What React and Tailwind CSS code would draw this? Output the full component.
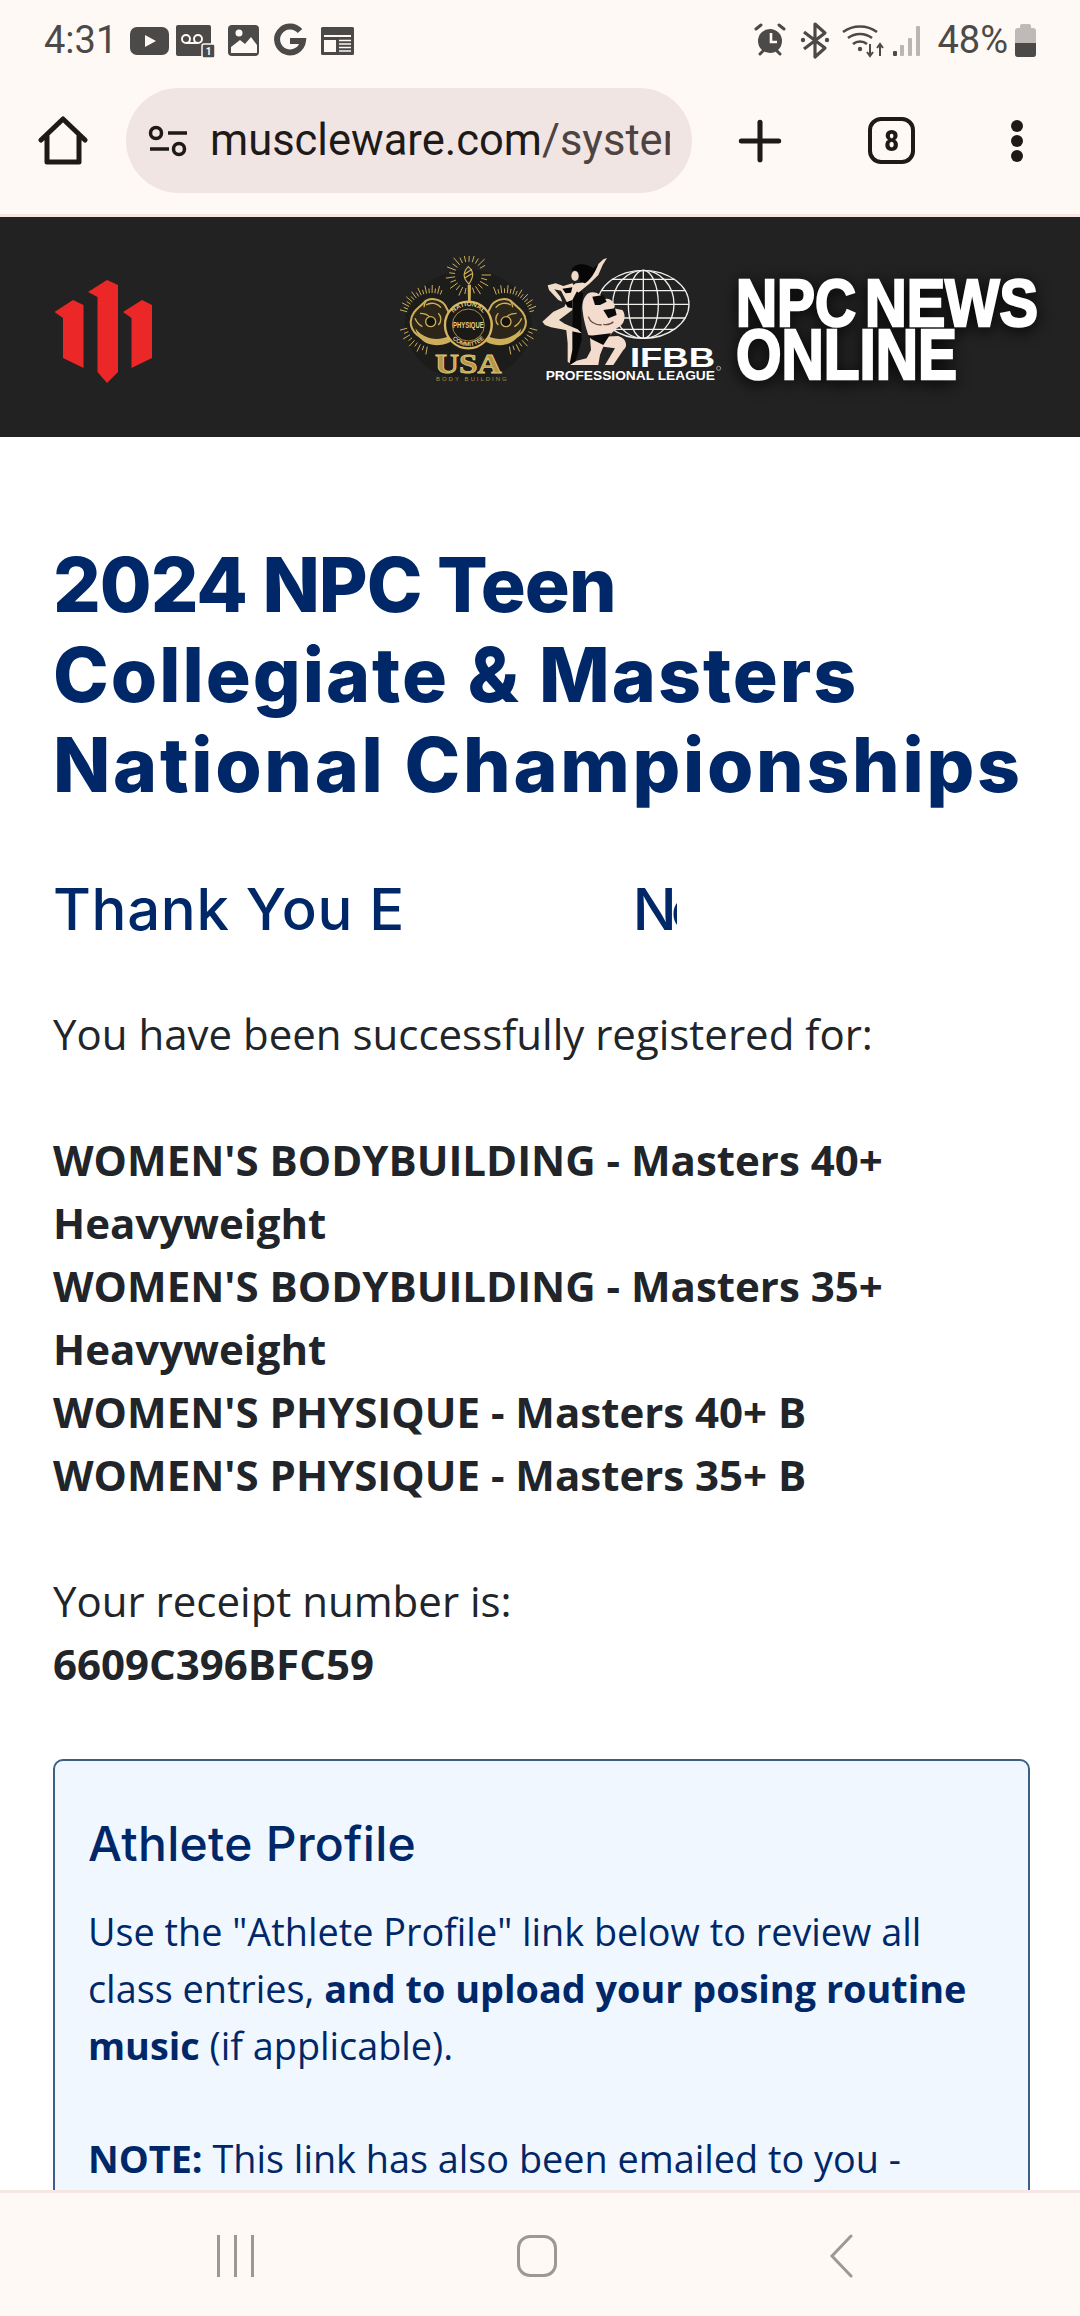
import React from 'react';
import { Plus } from 'lucide-react';

const bodyFont = "font-['Open_Sans',sans-serif]";
const headFont = "font-['Inter',sans-serif]";
const GOLD = '#cdae5a';

const StatusIcons = () => (
  <svg width="226" height="40" viewBox="0 0 226 40" className="block">
    {/* youtube */}
    <rect x="1" y="7" width="39" height="28" rx="7" fill="#4b4a48" />
    <path d="M16 15l11 6-11 6z" fill="#fff9f6" />
    {/* voicemail */}
    <rect x="47" y="5" width="35" height="31" rx="2" fill="#4b4a48" />
    <circle cx="57" cy="19" r="4" fill="none" stroke="#fff9f6" strokeWidth="2" />
    <circle cx="69" cy="19" r="4" fill="none" stroke="#fff9f6" strokeWidth="2" />
    <path d="M57 23h12" stroke="#fff9f6" strokeWidth="2" />
    <rect x="73" y="24" width="13" height="14" rx="2" fill="#4b4a48" stroke="#fff9f6" strokeWidth="1.500" />
    <text x="79.500" y="35" fontSize="10" fontWeight="700" textAnchor="middle" fill="#fff9f6" fontFamily="Roboto, sans-serif">1</text>
    {/* picture */}
    <rect x="99" y="5" width="31" height="31" rx="4" fill="#4b4a48" />
    <path d="M102 33v-6l9-7 5 4 6-7 6 8v8z" fill="#fff9f6" />
    <circle cx="110" cy="13" r="3.500" fill="#fff9f6" />
    {/* google */}
    <path d="M171 11a13 13 0 1 0 3 10h-13" fill="none" stroke="#4b4a48" strokeWidth="6" />
    {/* news */}
    <rect x="192" y="7" width="33" height="28" rx="1.500" fill="#4b4a48" />
    <rect x="195" y="15" width="27" height="2" fill="#fff9f6" />
    <rect x="195" y="20" width="12" height="12" fill="#fff9f6" />
    <path d="M210 20.500h12M210 24h12M210 27.500h12M210 31h12" stroke="#fff9f6" strokeWidth="1.600" />
  </svg>
);

const SystemIcons = () => (
  <svg width="167" height="40" viewBox="0 0 167 40" className="block">
    {/* alarm */}
    <circle cx="16" cy="21" r="12" fill="#4b4a48" />
    <path d="M17 13v9h6" fill="none" stroke="#fff9f6" strokeWidth="2.600" />
    <path d="M2 9l5-4M30 9l-5-4M6 34l3-3M26 34l-3-3" stroke="#4b4a48" strokeWidth="3" strokeLinecap="round" />
    {/* bluetooth */}
    <path d="M50 12l21 16-10 9V4l10 9-21 16" fill="none" stroke="#4b4a48" strokeWidth="3.200" strokeLinejoin="round" />
    <circle cx="49" cy="20" r="2.200" fill="#4b4a48" />
    <circle cx="73" cy="20" r="2.200" fill="#4b4a48" />
    {/* wifi */}
    <path d="M89 12a29 29 0 0 1 34 0M94 18a20 20 0 0 1 24 0M99 24a11 11 0 0 1 14 0" fill="none" stroke="#4b4a48" strokeWidth="2.600" />
    <circle cx="106" cy="29" r="2.200" fill="#4b4a48" />
    <path d="M116 24v12M113 32l3 4 3-4M126 36V24M123 28l3-4 3 4" fill="none" stroke="#4b4a48" strokeWidth="2" />
    {/* signal */}
    <rect x="139" y="31" width="4" height="5" rx="1" fill="#4b4a48" />
    <rect x="146" y="25" width="4" height="11" rx="1" fill="#b9b6b3" />
    <rect x="154" y="18" width="4" height="18" rx="1" fill="#b9b6b3" />
    <rect x="162" y="6" width="4" height="30" rx="1" fill="#b9b6b3" />
  </svg>
);

const Battery = () => (
  <svg width="21" height="33" viewBox="0 0 21 33" className="block">
    <rect x="5" y="0" width="11" height="6" rx="2" fill="#bfbab7" />
    <rect x="0" y="4" width="21" height="29" rx="3" fill="#bfbab7" />
    <path d="M0 19h21v11a3 3 0 0 1-3 3H3a3 3 0 0 1-3-3z" fill="#4b4a48" />
  </svg>
);

const TabCount = () => (
  <div className="w-[47px] h-[47px] rounded-[13px] border-[4px] border-[#1d1a18] flex items-center justify-center">
    <span className="font-['Roboto',sans-serif] font-black text-[30px] leading-none text-[#1d1a18] scale-x-[0.85]">8</span>
  </div>
);

const RedLogo = () => (
  <svg width="100" height="132" viewBox="54 256 100 132" className="block shrink-0">
    <path d="M88 292l19-12 11 5v87l-11 11-9.500-11V297z" fill="#ec2727" />
    <path d="M54.500 312l18.500-12 10.500 5v63L63 358v-40z" fill="#ec2727" />
    <path d="M123 312l19-12 10 5v53l-20.500 10v-50z" fill="#ec2727" />
  </svg>
);

// fan of short strokes round a point, for the sunburst on the emblem
const rays = (cx, cy, r1, r2, from, to, n) =>
  Array.from({ length: n }, (_, i) => {
    const a = ((from + ((to - from) * i) / (n - 1)) * Math.PI) / 180;
    const long = i % 2 === 0 ? r2 : r2 - 10;
    return (
      <line
        key={`${cx}-${from}-${i}`}
        x1={cx + Math.cos(a) * r1}
        y1={cy + Math.sin(a) * r1}
        x2={cx + Math.cos(a) * long}
        y2={cy + Math.sin(a) * long}
      />
    );
  });

const EmblemArm = () => (
  <g>
    <path d="M135 165C120 145 85 140 70 160 55 175 35 185 32 215c0 30 28 55 68 57l40-2 10-20c-20-10-20-40-2-60z" fill="#2b2619" stroke={GOLD} strokeWidth="6" />
    <path d="M46 235c20 28 62 42 99 24l6 17c-48 22-96 5-105-41z" fill={GOLD} />
    <path d="M78 165c15-10 35-5 45 8M60 190c15 0 25 5 30 12M115 190c10 10 10 25 0 35M45 205c5 12 12 20 22 25M80 150c-5 8-8 14-8 22" fill="none" stroke={GOLD} strokeWidth="4" />
    <circle cx="92" cy="215" r="15" fill="#14120e" stroke={GOLD} strokeWidth="4" />
  </g>
);

const NpcEmblem = () => (
  <svg width="140" height="132" viewBox="400 256 140 132" className="block shrink-0">
    <g transform="translate(400 250) scale(0.3333)">
      <ellipse cx="205" cy="225" rx="190" ry="165" fill="#1c1c1a" />
      <g stroke={GOLD} strokeWidth="3">
        {rays(205, 75, 40, 68, 0, 330, 24)}
        {rays(95, 205, 76, 100, 195, 290, 16)}
        {rays(315, 205, 76, 100, -110, -15, 16)}
        {rays(95, 215, 76, 100, 100, 165, 9)}
        {rays(315, 215, 76, 100, 15, 80, 9)}
      </g>
      <path d="M205 50c16 14 18 28 2 52-18-16-20-34-2-52zM194 72l22-14M194 84l24-14" fill="none" stroke={GOLD} strokeWidth="3.500" />
      <path d="M203 104h10l-1 52h-8z" fill={GOLD} />
      <EmblemArm />
      <g transform="translate(410 0) scale(-1 1)">
        <EmblemArm />
      </g>
      <circle cx="205" cy="225" r="70" fill="#1b1a16" stroke="#d5b562" strokeWidth="7" />
      <circle cx="205" cy="225" r="48" fill="#1b1a16" stroke="#a58a45" strokeWidth="3" />
      <defs>
        <path id="npcTop" d="M148 225a57 57 0 0 1 114 0" />
        <path id="npcBottom" d="M142 225a63 63 0 0 0 126 0" />
      </defs>
      <text fontSize="20" fontWeight="700" fill="#e2c878" fontFamily="'Liberation Sans', sans-serif" textAnchor="middle">
        <textPath href="#npcTop" startOffset="50%">NATIONAL</textPath>
      </text>
      <text fontSize="18" fontWeight="700" fill="#e2c878" fontFamily="'Liberation Sans', sans-serif" textAnchor="middle">
        <textPath href="#npcBottom" startOffset="50%">COMMITTEE</textPath>
      </text>
      <text x="205" y="234" fontSize="26" fontWeight="700" fill="#e8cf83" textAnchor="middle" textLength="92" lengthAdjust="spacingAndGlyphs" fontFamily="'Liberation Sans', sans-serif">PHYSIQUE</text>
      <text x="205" y="369" fontSize="82" fontWeight="700" fill="#b3964b" stroke="#e0c675" strokeWidth="2.500" textAnchor="middle" textLength="200" lengthAdjust="spacingAndGlyphs" fontFamily="'Liberation Serif', serif">USA</text>
      <text x="214" y="394" fontSize="18" fill="#a58a45" textAnchor="middle" textLength="212" fontFamily="'Liberation Sans', sans-serif">BODY   BUILDING</text>
    </g>
  </svg>
);

const IfbbLogo = () => (
  <svg width="190" height="132" viewBox="535 256 190 132" className="block shrink-0">
    <g transform="translate(535 250) scale(0.3333)">
      {/* globe */}
      <g fill="none" stroke="#f1efec" strokeWidth="4">
        <ellipse cx="325" cy="163" rx="137" ry="102" />
        <ellipse cx="325" cy="163" rx="92" ry="102" />
        <ellipse cx="325" cy="163" rx="45" ry="102" />
        <path d="M325 61v204M188 163h274M198 122h254M230 88h190M198 204h254M230 238h190" />
      </g>
      {/* woman */}
      <path d="M112 130l18-10 15 10-7 50 2 90-20 70-15 5 7-55v-55l2-55z" fill="#080808" />
      <path d="M216 24l-11 4-15 14-18 30-32 26-18 2-10 8 18 20 35-28 25-25 13-30z" fill="#f1dcca" />
      <path d="M112 100l-27 8-23-8-24 6 4 14 28 30 12 5-6-15-18-22 20 4 17 33-7 15-33 15-33 30 8 10 18 7 32 6 60 12-12-12-38-16-18-12 40-30v-30l16-30z" fill="#f1dcca" />
      <path d="M92 222l20 18v60l-8 40-6-5v-55z" fill="#f1dcca" />
      <ellipse cx="120" cy="78" rx="11" ry="15" fill="#f1dcca" />
      <path d="M108 62c7-22 42-27 67-7l15-13c-10 28-25 48-40 58l-15-5-3-25c-4-10-17-12-24-8z" fill="#060606" />
      <path d="M82 116l30-4-4 16-16 2zM90 158l22-8v25l-14-3z" fill="#060606" />
      {/* man */}
      <path d="M160 130c15-8 40 0 45 20 20-15 45 20 30 25l27 5c13 15 8 45-17 55l-20 20-35 7-30-7c-10-30-15-50-18-80 0-25 8-37 18-45z" fill="#f3dccd" />
      <path d="M165 262l85-4c25 7 30 32 15 42l-30 45h-25l30-50-35-5-10 25-5 30h-85l20-13 30-7 13-25z" fill="#f3dccd" />
      <path d="M172 140l33-5 10 20-20 10-15 0zM205 180l35-5 5 20-25 10zM160 258l68-8-23 35-35-17z" fill="#0b0b0b" />
      <path d="M160 200c5 15 20 25 40 25M235 215c-8 8-20 10-30 8" fill="none" stroke="#6a4c3c" strokeWidth="4" />
      <text x="285" y="350" fontSize="84" fontWeight="700" fill="#fff" textLength="255" lengthAdjust="spacingAndGlyphs" fontFamily="'Liberation Sans', sans-serif">IFBB</text>
      <text x="32" y="390" fontSize="40" fontWeight="700" fill="#fff" textLength="508" lengthAdjust="spacingAndGlyphs" fontFamily="'Liberation Sans', sans-serif">PROFESSIONAL LEAGUE</text>
      <circle cx="551" cy="355" r="6" fill="none" stroke="#ddd" strokeWidth="2" />
    </g>
  </svg>
);

const NpcNews = () => (
  <svg width="312" height="132" viewBox="733 256 312 132" className="block shrink-0 [filter:drop-shadow(0_3px_8px_rgba(0,0,0,0.9))]">
    <g fill="#fff" stroke="#fff" strokeWidth="2.500" fontWeight="700" fontFamily="'Liberation Sans', sans-serif">
      <text x="736" y="326" fontSize="66" textLength="120" lengthAdjust="spacingAndGlyphs">NPC</text>
      <text x="865" y="326" fontSize="66" textLength="173" lengthAdjust="spacingAndGlyphs">NEWS</text>
      <text x="736" y="379" fontSize="71" textLength="221" lengthAdjust="spacingAndGlyphs">ONLINE</text>
    </g>
  </svg>
);

const NavBar = () => (
  <div className="flex items-center pl-[217px] pt-[41px]">
    <div className="flex gap-[14px] w-[37px]">
      <div className="w-[3px] h-[42px] bg-[#9d9895] shrink-0" />
      <div className="w-[3px] h-[42px] bg-[#9d9895] shrink-0" />
      <div className="w-[3px] h-[42px] bg-[#9d9895] shrink-0" />
    </div>
    <div className="ml-[263px] w-[40px] h-[42px] rounded-[13px] border-[3px] border-[#9d9895]" />
    <svg width="24" height="44" viewBox="0 0 24 44" className="ml-[272px]">
      <path d="M22 2L3 22l19 20" fill="none" stroke="#9d9895" strokeWidth="3" strokeLinecap="round" />
    </svg>
  </div>
);

export default function App() {
  return (
    <div className={`w-[1080px] h-[2316px] flex flex-col overflow-hidden bg-white ${bodyFont}`}>
      {/* browser chrome */}
      <div className="bg-[#fff9f6] h-[217px] shrink-0 border-b-[3px] border-[#f5e6e3] flex flex-col">
        <div className="h-[80px] px-[44px] flex items-center justify-between font-['Roboto',sans-serif] text-[#4b4a48]">
          <div className="flex items-center gap-[12px]">
            <span className="text-[38px] leading-none">4:31</span>
            <StatusIcons />
          </div>
          <div className="flex items-center">
            <SystemIcons />
            <span className="ml-[16px] text-[38px] leading-none">48%</span>
            <div className="ml-[7px]"><Battery /></div>
          </div>
        </div>
        <div className="flex items-center h-[105px] mt-[8px] pl-[38px]">
          <svg width="50" height="50" viewBox="0 0 50 50" className="shrink-0">
            <path d="M3 24L25 3l22 21M9 19v27h32V19" fill="none" stroke="#1d1a18" strokeWidth="5" strokeLinejoin="round" strokeLinecap="round" />
          </svg>
          <div className="ml-[38px] w-[566px] h-[105px] rounded-full bg-[#f1e5e4] flex items-center pl-[22px] shrink-0">
            <svg width="40" height="34" viewBox="0 0 40 34" className="shrink-0">
              <circle cx="8" cy="9" r="5.500" fill="none" stroke="#1d1a18" strokeWidth="3.500" />
              <path d="M20 9h19M2 25h19" stroke="#1d1a18" strokeWidth="3.500" />
              <circle cx="31" cy="25" r="5.500" fill="none" stroke="#1d1a18" strokeWidth="3.500" />
            </svg>
            <div className="ml-[22px] w-[460px] overflow-hidden whitespace-nowrap font-['Roboto',sans-serif] text-[43.500px] text-[#1d1a18]">
              muscleware.com<span className="text-[#4d4341]">/system/registration</span>
            </div>
          </div>
          <Plus size={64} strokeWidth={1.900} color="#1d1a18" className="ml-[36px] shrink-0" />
          <div className="ml-[76px] shrink-0"><TabCount /></div>
          <div className="ml-[96px] flex flex-col gap-[3px] shrink-0">
            <div className="w-[12px] h-[12px] rounded-full bg-[#1d1a18]" />
            <div className="w-[12px] h-[12px] rounded-full bg-[#1d1a18]" />
            <div className="w-[12px] h-[12px] rounded-full bg-[#1d1a18]" />
          </div>
        </div>
      </div>

      {/* page */}
      <div className="flex-1 min-h-0 overflow-hidden">
        <div className="h-[220px] bg-[#222222] flex items-center pl-[54px] pb-[10px]">
          <RedLogo />
          <div className="flex items-center ml-[246px]">
            <NpcEmblem />
            <div className="ml-[-5px]"><IfbbLogo /></div>
            <div className="ml-[8px]"><NpcNews /></div>
          </div>
        </div>

        <div className="px-[53px] pt-[103px]">
          <h1 className={`${headFont} font-extrabold text-[75px] leading-[90px] text-[#002868] whitespace-nowrap`}>
            <span className="block tracking-[-1px]">2024 NPC Teen</span>
            <span className="block tracking-[2px]">Collegiate &amp; Masters</span>
            <span className="block tracking-[2.700px]">National Championships</span>
          </h1>
          <h2 className={`${headFont} font-medium text-[58px] tracking-[0.7px] leading-[84px] mt-[57px] text-[#002868] flex whitespace-nowrap`}>
            <span>Thank You E</span>
            <span className="ml-[228px] w-[44px] overflow-hidden tracking-[-6px]">Ne</span>
          </h2>

          <div className="mt-[51px] text-[42px] leading-[63px] text-[#212529]">
            <p>You have been successfully registered for:</p>
            <p className="mt-[63px] font-bold">
              WOMEN'S BODYBUILDING - Masters 40+<br />Heavyweight<br />
              WOMEN'S BODYBUILDING - Masters 35+<br />Heavyweight<br />
              WOMEN'S PHYSIQUE - Masters 40+ B<br />
              WOMEN'S PHYSIQUE - Masters 35+ B
            </p>
            <p className="mt-[63px]">Your receipt number is:</p>
            <p className="font-bold">6609C396BFC59</p>
          </div>

          <div className="mt-[64px] w-[977px] border-[2px] border-[#3b6083] rounded-[10px] bg-[#f1f7ff] pl-[33px] pr-[34px] pt-[48px] pb-[40px] text-[#002868]">
            <h3 className={`${headFont} font-medium text-[48px] tracking-[0.3px] leading-[70px]`}>Athlete Profile</h3>
            <p className="mt-[24px] text-[37.800px] leading-[57px]">
              Use the "Athlete Profile" link below to review all class entries, <b>and to upload your posing routine music</b> (if applicable).
            </p>
            <p className="mt-[56px] text-[37.800px] leading-[57px]"><b>NOTE:</b> This link has also been emailed to you - please check your inbox.</p>
          </div>
        </div>
      </div>

      {/* android nav */}
      <div className="h-[126px] shrink-0 bg-[#fff9f6] border-t-[3px] border-[#f5e6e3]">
        <NavBar />
      </div>
    </div>
  );
}
